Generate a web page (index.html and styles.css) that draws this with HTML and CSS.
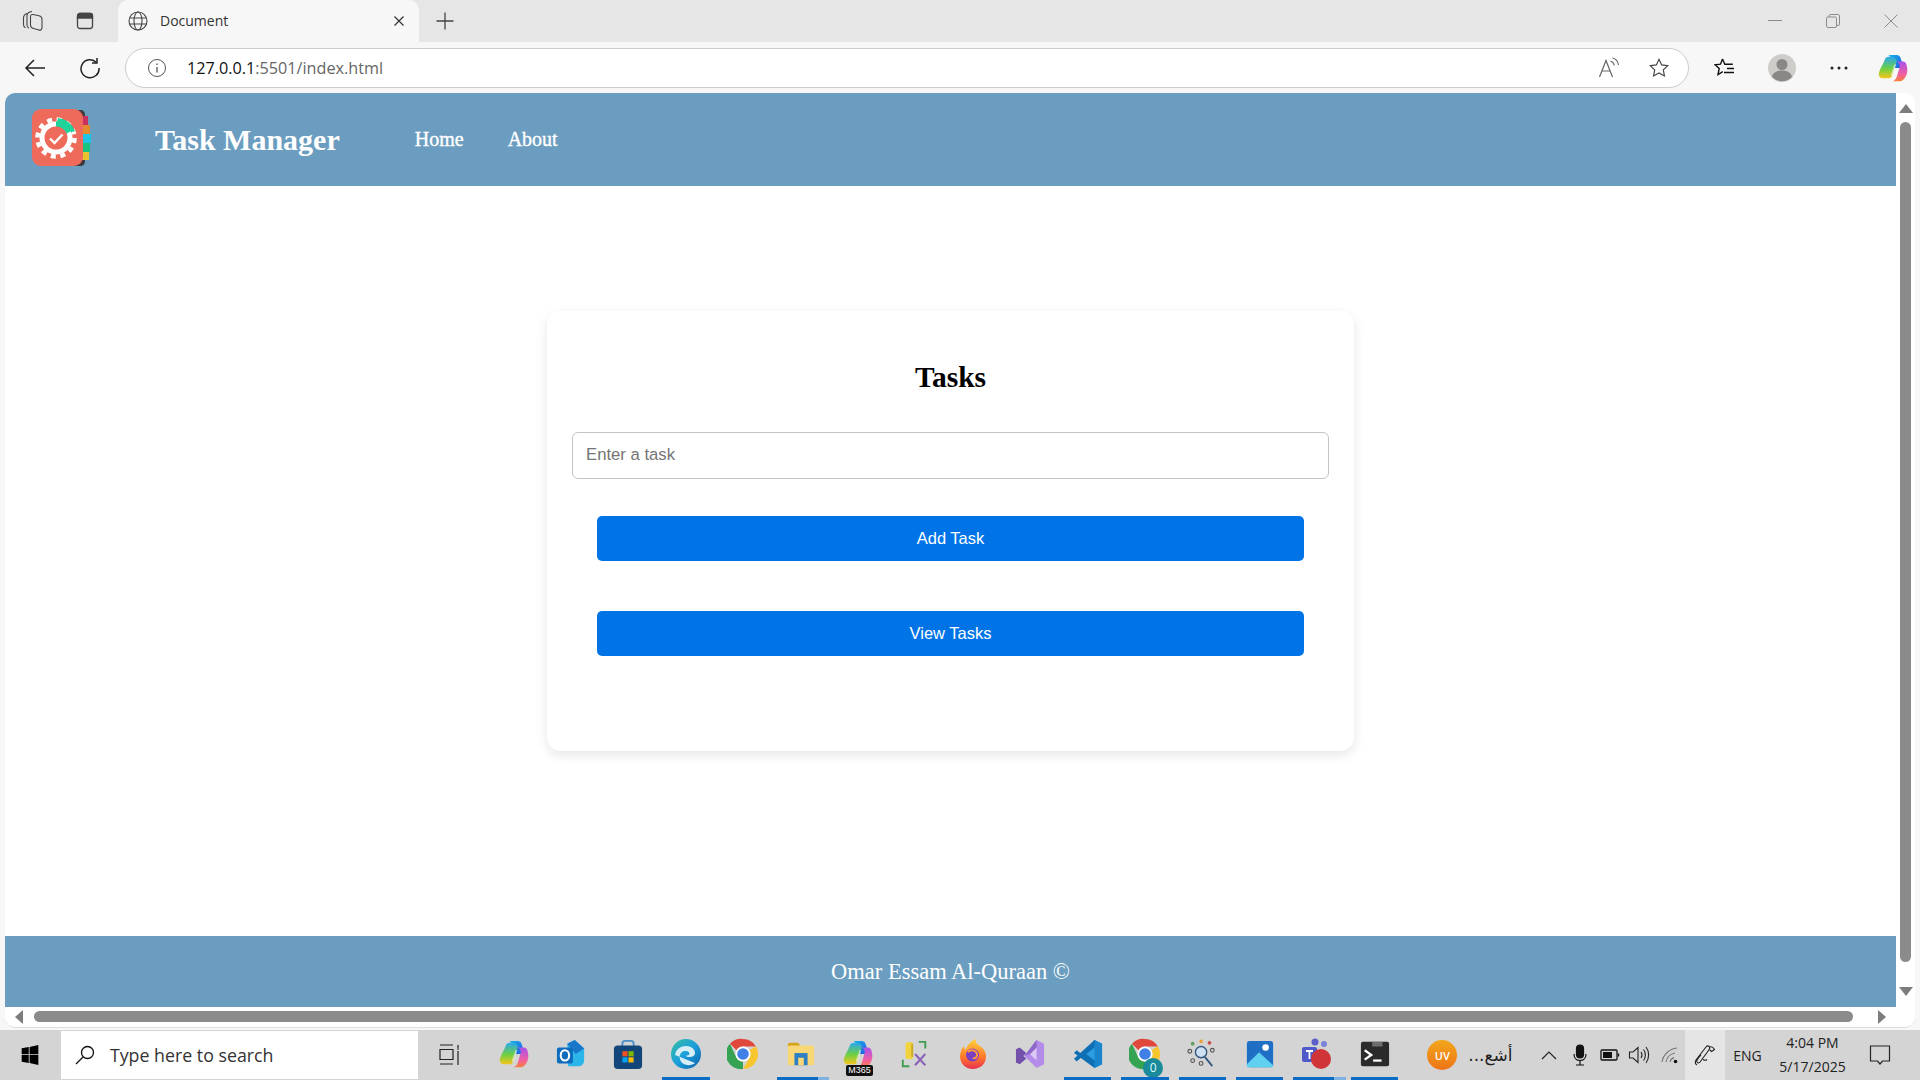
FILE: index.html
```html
<!DOCTYPE html>
<html lang="en">
<head>
    <meta charset="utf-8">
    <meta name="viewport" content="width=device-width,initial-scale=1.0">
    <title>Document</title>
    <link rel="stylesheet" href="styles.css">
</head>
<body>
    <svg class="defs" aria-hidden="true">
        <defs>
            <linearGradient id="cp-a" x1="0" y1="0" x2="1" y2="1"><stop offset="0" stop-color="#16b4ea"/><stop offset="1" stop-color="#2456e0"/></linearGradient>
            <linearGradient id="cp-b" x1="0" y1="0" x2="0" y2="1"><stop offset="0" stop-color="#2aa8f0"/><stop offset=".55" stop-color="#6fd042"/><stop offset="1" stop-color="#f7c51e"/></linearGradient>
            <linearGradient id="cp-c" x1="0" y1="0" x2="0" y2="1"><stop offset="0" stop-color="#a752ec"/><stop offset=".65" stop-color="#f25f9f"/><stop offset="1" stop-color="#f77f3a"/></linearGradient>
            <linearGradient id="edge-a" x1="0" y1="0" x2="1" y2="1"><stop offset="0" stop-color="#35c1a0"/><stop offset=".5" stop-color="#1c9fdc"/><stop offset="1" stop-color="#0b5fa8"/></linearGradient>
            <linearGradient id="fx-a" x1="0" y1="0" x2="0" y2="1"><stop offset="0" stop-color="#ffd23a"/><stop offset=".6" stop-color="#ff7a2b"/><stop offset="1" stop-color="#e8304f"/></linearGradient>
            <linearGradient id="uv-a" x1="0" y1="0" x2="0" y2="1"><stop offset="0" stop-color="#f2a71c"/><stop offset="1" stop-color="#ee7416"/></linearGradient>
            <symbol id="copilot" viewBox="0 0 32 32">
                <path d="M11 2h9c2 0 3.300 1 4 3l3.600 11h-9.600L13.500 5c-.5-1.700-1.300-2.600-2.500-3z" fill="url(#cp-a)"/>
                <path d="M11.500 4C9.500 4 8 5 7.300 7C5 13 2 17 1 21c-.8 3 1 6 4 6h6c2.200 0 3.500-1 4.200-3L20 8.500C19 6 17 4 15 4z" fill="url(#cp-b)"/>
                <path d="M20 9h6.500c2 0 3 1 3.500 2.500 1.500 4 1.800 8 .5 11.500-1 2.700-3.500 7-7 7h-8.500c2 0 4-1.700 5-4.500l3-10c.7-2.500 0-5-3-6.500z" fill="url(#cp-c)"/>
                <path d="M18.500 12l-4 12" stroke="#fff" stroke-opacity=".55" stroke-width="2"/>
            </symbol>
            <symbol id="chrome" viewBox="0 0 32 32">
                <path d="M16 1a15 15 0 0 1 13 7.500H16a7.500 7.500 0 0 0-6.500 3.750L3 5.800A15 15 0 0 1 16 1z" fill="#e0483c"/>
                <path d="M29 8.500A15 15 0 0 1 16 31l6.500-11.250A7.500 7.500 0 0 0 22.500 12z" fill="#f7c62f"/>
                <path d="M3 5.800 9.500 19.750A7.500 7.500 0 0 0 16 23.500L16 31A15 15 0 0 1 3 5.800z" fill="#35a351"/>
                <circle cx="16" cy="16" r="7.500" fill="#fff"/>
                <circle cx="16" cy="16" r="5.800" fill="#3f7fe6"/>
            </symbol>
            <symbol id="tray-star" viewBox="0 0 24 24">
                <path d="M12 2.500l2.900 6.100 6.600.9-4.800 4.600 1.200 6.600-5.900-3.200-5.900 3.200 1.200-6.600L2.500 9.500l6.600-.9z"/>
            </symbol>
        </defs>
    </svg>

    <div class="browser">
        <div class="tab-strip">
            <div class="strip-btn">
                <svg class="ico-22" viewBox="0 0 22 22" fill="none" stroke="#444" stroke-width="1.100"><path d="M5 3.500C3 4.200 1.500 5.500 1.500 8v6.500c0 1.500.7 2.700 2 3.200"/><path d="M10 1.500C7.500 1.800 5 3 5 6v9c0 1.500.7 2.700 2 3.200"/><path d="M11 4.500l6 1.300c1.600.4 3 1.700 3 3.500v8.500c0 1.700-1.500 2.700-3 2.200l-5.500-1.500c-1.500-.4-3-1.700-3-3.500V6.500c0-1.500 1-2.300 2.500-2z"/></svg>
            </div>
            <div class="strip-btn">
                <svg class="ico-20" viewBox="0 0 20 20" fill="none" stroke="#444" stroke-width="1.300"><rect x="2.500" y="2.500" width="15" height="15" rx="2.500"/><path d="M2.500 5a2.500 2.500 0 0 1 2.500-2.500h10A2.500 2.500 0 0 1 17.500 5v2h-15z" fill="#444"/></svg>
            </div>
            <div class="tab">
                <svg class="ico-20" viewBox="0 0 20 20" fill="none" stroke="#444" stroke-width="1.100"><circle cx="10" cy="10" r="9"/><ellipse cx="10" cy="10" rx="4" ry="9"/><path d="M1.500 7h17M1.500 13h17"/></svg>
                <span class="tab-title">Document</span>
                <svg class="tab-close" viewBox="0 0 12 12" stroke="#333" stroke-width="1.200"><path d="M1.500 1.500l9 9M10.500 1.500l-9 9"/></svg>
            </div>
            <div class="strip-btn">
                <svg class="ico-20" viewBox="0 0 20 20" stroke="#444" stroke-width="1.300"><path d="M10 1.500v17M1.500 10h17"/></svg>
            </div>
            <div class="win-controls">
                <div class="win-btn"><svg class="ico-14" viewBox="0 0 14 14" stroke="#8c8c8c" stroke-width="1"><path d="M0 6.500h14"/></svg></div>
                <div class="win-btn"><svg class="ico-14" viewBox="0 0 14 14" fill="none" stroke="#8c8c8c" stroke-width="1"><rect x=".5" y="3" width="10" height="10.500" rx="1.500"/><path d="M3 3V2a1.500 1.500 0 0 1 1.500-1.500h8A1.500 1.500 0 0 1 13.500 2v8a1.500 1.500 0 0 1-1.500 1.500h-1"/></svg></div>
                <div class="win-btn"><svg class="ico-14" viewBox="0 0 14 14" stroke="#8c8c8c" stroke-width="1"><path d="M.5.5l13 13M13.500.5l-13 13"/></svg></div>
            </div>
        </div>

        <div class="toolbar">
            <div class="tool-btn">
                <svg class="ico-22" viewBox="0 0 22 22" fill="none" stroke="#222" stroke-width="1.500"><path d="M21 11H2M10 3l-8 8 8 8"/></svg>
            </div>
            <div class="tool-btn">
                <svg class="ico-22" viewBox="0 0 22 22" fill="none" stroke="#222" stroke-width="1.500"><path d="M17.500 5.500A9 9 0 1 0 20 11"/><path d="M18 1v5h-5"/></svg>
            </div>
            <div class="address">
                <svg class="ico-20" viewBox="0 0 20 20" fill="none" stroke="#555" stroke-width="1"><circle cx="10" cy="10" r="8.500"/><path d="M10 9v5.500M10 5.500v1.500" stroke-width="1.300"/></svg>
                <span class="url"><span class="url-host">127.0.0.1</span>:5501/index.html</span>
                <div class="address-end">
                    <svg class="ico-22" viewBox="0 0 22 22" fill="none" stroke="#666" stroke-width="1.200"><path d="M1.500 20 8 3.500 14.500 20M4 14h8"/><path d="M12.500 4c2 .6 3.300 2 3.800 4.500M14.500 1c3.300.8 5.500 3.500 6 7" stroke-width="1.100"/></svg>
                    <svg class="ico-22" viewBox="0 0 24 24" fill="none" stroke="#444" stroke-width="1.300"><use href="#tray-star"/></svg>
                </div>
            </div>
            <div class="tool-btn tool-btn-wide">
                <svg class="ico-22" viewBox="0 0 22 22" fill="none" stroke="#111" stroke-width="1.400"><path d="M8.500 2l2.300 5.200h8M8.500 2 6.500 7.200 1 7.800l4.200 3.700L4 17.500l4.800-2.800M13 11.500h7M10 15.500h10"/></svg>
            </div>
            <div class="tool-btn tool-btn-wide">
                <svg class="ico-28" viewBox="0 0 28 28"><circle cx="14" cy="14" r="14" fill="#cfcdca"/><circle cx="14" cy="10.500" r="5.500" fill="#8a8886"/><path d="M4 23c1-4.500 5-6.500 10-6.500s9 2 10 6.500a14 14 0 0 1-20 0z" fill="#8a8886"/></svg>
            </div>
            <div class="tool-btn tool-btn-wide">
                <svg class="ico-22" viewBox="0 0 22 22" fill="#222"><circle cx="4" cy="11" r="1.500"/><circle cx="11" cy="11" r="1.500"/><circle cx="18" cy="11" r="1.500"/></svg>
            </div>
            <div class="tool-btn tool-btn-last">
                <svg class="ico-30"><use href="#copilot"/></svg>
            </div>
        </div>

        <div class="viewport">
            <div class="page">
                <header class="navbar">
                    <svg class="logo" viewBox="0 0 60 58">
                        <path d="M38 1h10c3.500 0 5 2 5 5v46c0 3-1.500 5-5 5H38z" fill="#3f3a3c"/>
                        <rect x="50" y="7" width="6" height="9" fill="#c8305f"/>
                        <rect x="50" y="16" width="8" height="9" fill="#e58a2e"/>
                        <rect x="50" y="25" width="9" height="9" fill="#1fc4e2"/>
                        <rect x="50" y="34" width="8" height="9" fill="#16c47f"/>
                        <rect x="50" y="43" width="7" height="8" fill="#e8c42f"/>
                        <rect x="0" y="0" width="51" height="57" rx="9" fill="#ee6b5b"/>
                        <circle cx="24" cy="29" r="18.500" fill="none" stroke="#fff" stroke-width="4.500" stroke-dasharray="5 4.700"/>
                        <circle cx="24" cy="29" r="16.500" fill="#fff"/>
                        <path d="M24 12.500a16.500 16.500 0 0 1 15 9.500l-5 3a12 12 0 0 0-10-6z" fill="#1fd49a"/>
                        <path d="M26 9a20 20 0 0 1 17 13l-4 1.500A16 16 0 0 0 25 13z" fill="#1fd49a"/>
                        <circle cx="24" cy="29" r="11.500" fill="#ee6b5b"/>
                        <path d="M18 29.500l4.500 4.500 8-8.500" fill="none" stroke="#fff" stroke-width="2.400"/>
                    </svg>
                    <span class="brand">Task Manager</span>
                    <nav class="nav-links">
                        <a href="#">Home</a>
                        <a href="#">About</a>
                    </nav>
                </header>

                <main class="content">
                    <section class="card">
                        <h2>Tasks</h2>
                        <input type="text" class="task-input" placeholder="Enter a task">
                        <button class="btn btn-add">Add Task</button>
                        <button class="btn">View Tasks</button>
                    </section>
                </main>

                <footer class="footer">Omar Essam Al-Quraan ©</footer>
            </div>

            <div class="vscroll">
                <span class="arrow arrow-up"></span>
                <span class="vthumb"></span>
                <span class="arrow arrow-down"></span>
            </div>
            <div class="hscroll">
                <span class="arrow arrow-left"></span>
                <span class="hthumb"></span>
                <span class="arrow arrow-right"></span>
            </div>
        </div>
    </div>

    <div class="taskbar">
        <div class="start">
            <svg class="ico-20" viewBox="0 0 20 24" fill="#000"><path d="M0 4l8.500-1.500V11H0zM9.500 2.300 20 0v11H9.500zM0 12h8.500v9.500L0 20zM9.500 12H20v12L9.500 21.700z"/></svg>
        </div>
        <div class="search">
            <svg class="ico-20" viewBox="0 0 20 20" fill="none" stroke="#111" stroke-width="1.300"><circle cx="12.500" cy="7.500" r="6"/><path d="M8 12 1 19"/></svg>
            <span>Type here to search</span>
        </div>
        <div class="taskview">
            <svg class="ico-22" viewBox="0 0 22 22" fill="none" stroke="#222" stroke-width="1.200"><path d="M1 1h13M1 5.500h13v10H1zM1 20h13M19 1v3M19 7v14" /><path d="M19 4.500v1" stroke-width="2"/></svg>
        </div>

        <div class="task-icons">
            <div class="task-item"><svg class="ico-30"><use href="#copilot"/></svg></div>
            <div class="task-item">
                <svg class="ico-30" viewBox="0 0 32 32"><path d="M12 5 20 1l10 9v13c0 3-2 6-6 6H13z" fill="#2cb5e8"/><path d="M12 5 20 1l10 9-9 6z" fill="#1877c9"/><rect x="1" y="9" width="17" height="17" rx="2" fill="#0f6cbd"/><ellipse cx="9.500" cy="17.500" rx="4.500" ry="5.500" fill="none" stroke="#fff" stroke-width="2.200"/></svg>
            </div>
            <div class="task-item">
                <svg class="ico-30" viewBox="0 0 32 32"><path d="M10 8V5a3 3 0 0 1 3-3h6a3 3 0 0 1 3 3v3" fill="none" stroke="#4a90c8" stroke-width="2"/><rect x="1" y="7" width="30" height="25" rx="4" fill="#12457a"/><rect x="10" y="13" width="5.500" height="5.500" fill="#f25022"/><rect x="16.500" y="13" width="5.500" height="5.500" fill="#7fba00"/><rect x="10" y="19.500" width="5.500" height="5.500" fill="#00a4ef"/><rect x="16.500" y="19.500" width="5.500" height="5.500" fill="#ffb900"/></svg>
            </div>
            <div class="task-item task-item-open">
                <svg class="ico-32" viewBox="0 0 32 32"><circle cx="16" cy="16" r="15" fill="url(#edge-a)"/><path d="M5 17c1-6 6-9 11-9 5 0 9 3 9 7 0 3-3 4-6 4-2 0-3-.6-3-1.500 3 .5 4-1.500 3-3-1.500-2-6-2-8 .5-2.500 3-1.500 8 2 10.500 4 2.500 9 2 12-.5" fill="#d7eef7"/></svg>
            </div>
            <div class="task-item"><svg class="ico-32"><use href="#chrome"/></svg></div>
            <div class="task-item task-item-open task-item-multi">
                <svg class="ico-30" viewBox="0 0 32 32"><path d="M2 6a2 2 0 0 1 2-2h9l3 4h-14z" fill="#d6a21c"/><rect x="2" y="7" width="28" height="21" rx="2" fill="#f8d776"/><rect x="9" y="15" width="14" height="13" fill="#2d7fc4"/><rect x="13" y="20" width="6" height="8" fill="#f8d776"/></svg>
            </div>
            <div class="task-item m365">
                <svg class="ico-30"><use href="#copilot"/></svg>
                <span class="m365-tag">M365</span>
            </div>
            <div class="task-item">
                <svg class="ico-30" viewBox="0 0 32 32"><path d="M6 5c0-2 8-2 8 0v15c0 2-8 2-8 0z" fill="#f2d33c"/><path d="M14 5h-2v14h2z" fill="#c9a92a"/><path d="M20 3h7v7M3 22v7h7" fill="none" stroke="#3f9e4d" stroke-width="2"/><path d="M16 28l11-12M27 28 16 16" stroke="#8a63b8" stroke-width="2.200"/></svg>
            </div>
            <div class="task-item">
                <svg class="ico-32" viewBox="0 0 32 32"><path d="M16 31C8 31 3 25 3 18c0-4 2-8 4-10 0 2 1 3 2 4 1-5 5-9 10-11-1 3 1 5 4 7 4 3 6 6 6 11 0 7-6 12-13 12z" fill="url(#fx-a)"/><circle cx="15.500" cy="17" r="6.500" fill="#7b3fc4"/><path d="M11 14c3-3 8-2 9 2 .6 3-2 5-4 4" fill="none" stroke="#ff9a3c" stroke-width="2"/></svg>
            </div>
            <div class="task-item">
                <svg class="ico-30" viewBox="0 0 32 32"><path d="M23 1l8 4v22l-8 4-13-13z" fill="#b38be8"/><path d="M23 9v14l-7-7z" fill="#dcc9f5"/><path d="M1 11l4-2 7 6-3 3 3 3-7 6-4-2z" fill="#7450ad"/><path d="M10 18l13-17v8l-7 7z" fill="#8c66c9"/></svg>
            </div>
            <div class="task-item task-item-open">
                <svg class="ico-30" viewBox="0 0 32 32"><path d="M23 1l8 4v22l-8 4-13-12z" fill="#2a9ee0"/><path d="M23 1v30l8-4V5z" fill="#1a84cc"/><path d="M23 9l-9 7 9 7v8L4 17l-3-2 3-3 5 4 14-15z" fill="#0e6fb5"/><path d="M1 21l3 3 19-17V1z" fill="#0e6fb5"/></svg>
            </div>
            <div class="task-item task-item-open chrome-badge">
                <svg class="ico-32"><use href="#chrome"/></svg>
                <span class="badge-0">0</span>
            </div>
            <div class="task-item task-item-open">
                <svg class="ico-30" viewBox="0 0 32 32"><circle cx="15" cy="14" r="6" fill="#cfe0f2" stroke="#34577f" stroke-width="1.500"/><path d="M19 19l8 10" stroke="#34577f" stroke-width="2"/><g fill="none" stroke="#555" stroke-width="1.200"><circle cx="3" cy="13" r="2"/><circle cx="27" cy="12" r="2"/><circle cx="6" cy="23" r="2"/><circle cx="15" cy="26" r="2"/></g><circle cx="15" cy="2.500" r="2" fill="#e8a33c"/><circle cx="24" cy="4" r="2" fill="#c8504c"/><circle cx="6" cy="5" r="2" fill="#5aa05a"/></svg>
            </div>
            <div class="task-item task-item-open">
                <svg class="ico-30" viewBox="0 0 32 32"><rect x="2" y="2" width="28" height="28" rx="3" fill="#1f6fc4"/><path d="M2 27 15 14l15 14v2H2z" fill="#5fd0f0"/><circle cx="22" cy="9" r="3.500" fill="#fff"/></svg>
            </div>
            <div class="task-item task-item-open task-item-multi">
                <svg class="ico-32" viewBox="0 0 32 32"><circle cx="23" cy="6" r="3" fill="#7b83d6"/><circle cx="14" cy="4" r="3.500" fill="#5b5fc7"/><rect x="1" y="9" width="15" height="15" rx="2" fill="#5059c9"/><path d="M5 13h7M8.500 13v8" stroke="#fff" stroke-width="1.800"/><circle cx="20" cy="21" r="10" fill="#d13438"/></svg>
            </div>
            <div class="task-item task-item-open">
                <svg class="ico-30" viewBox="0 0 32 32"><rect x="1" y="3" width="30" height="26" rx="2" fill="#2b2b2b"/><rect x="13" y="3" width="11" height="5" fill="#6d6d6d"/><path d="M5 12l7 5-7 5" fill="none" stroke="#fff" stroke-width="2.400"/><path d="M14 23h9" stroke="#fff" stroke-width="2.400"/></svg>
            </div>
        </div>

        <div class="news">
            <svg class="ico-30" viewBox="0 0 30 30"><circle cx="15" cy="15" r="15" fill="url(#uv-a)"/></svg>
            <span class="uv">UV</span>
            <span class="news-text" dir="rtl" lang="ar">أشع...</span>
        </div>

        <div class="tray">
            <div class="tray-cell"><svg class="ico-16" viewBox="0 0 16 16" fill="none" stroke="#222" stroke-width="1.200"><path d="M1 12l7-7 7 7"/></svg></div>
            <div class="tray-cell"><svg class="ico-22" viewBox="0 0 22 22" fill="none" stroke="#111" stroke-width="1.200"><rect x="7.500" y="1" width="7" height="13" rx="3.500" fill="#111"/><path d="M5 10c0 4 2.500 6.500 6 6.500s6-2.500 6-6.500M11 16.500V21M7 21h8"/></svg></div>
            <div class="tray-cell"><svg class="ico-20" viewBox="0 0 20 20" fill="none" stroke="#111" stroke-width="1.300"><rect x="1" y="5" width="16" height="10" rx="1"/><rect x="3" y="7" width="9" height="6" fill="#111" stroke="none"/><path d="M18.500 8.500v3"/></svg></div>
            <div class="tray-cell"><svg class="ico-22" viewBox="0 0 22 22" fill="none" stroke="#222" stroke-width="1.100"><path d="M1.500 8v6h3.500L10 18.500v-15L5 8z"/><path d="M13 8c1.200 1.800 1.200 4.200 0 6M15.500 5.500c2.500 3 2.500 8 0 11M18 3c3.500 4.500 3.500 11.500 0 16"/></svg></div>
            <div class="tray-cell"><svg class="ico-18" viewBox="0 0 18 18" fill="none" stroke="#777" stroke-width="1.100"><path d="M1 16C2 9 8 3 16 2M5 16c.8-4.500 4-8 9-9M9 16c.4-2 2-3.800 4-4.400"/><circle cx="14.500" cy="15.500" r="1.800" fill="#111" stroke="none"/></svg></div>
            <div class="tray-cell tray-pen"><svg class="ico-22" viewBox="0 0 22 22" fill="none" stroke="#222" stroke-width="1.100"><path d="M3 21c-2-1-2-3-1-5L12 3c1-1.500 3-1.500 3.500 0s0 2.500-1 3.500L6 18c-.8 1-2 1.500-3 0-1-2 2-5 4-7M15.500 3c1.500-.5 3.500 0 5 2.500l-3 2-1.500-1.500M9 15.500c1.500 1 3 1 4 0"/></svg></div>
            <div class="tray-cell tray-text">ENG</div>
            <div class="tray-cell clock"><span>4:04 PM</span><span>5/17/2025</span></div>
            <div class="tray-cell"><svg class="ico-22" viewBox="0 0 22 22" fill="none" stroke="#222" stroke-width="1.200"><path d="M1.500 2h19v15h-7L11 20l-2.500-3h-7z"/></svg></div>
            <div class="tray-cell"></div>
        </div>
    </div>
</body>
</html>
```

FILE: styles.css
```css
* {box-sizing: border-box;}
html, body {margin: 0; height: 100%; overflow: hidden;}
body {width: 1920px; height: 1080px; display: flex; flex-direction: column; background: #d4d4d4; font-family: "Open Sans", "Noto Sans", sans-serif; color: #222;}
svg {display: block; flex: none;}
.defs {position: absolute; width: 0; height: 0;}

.ico-14 {width: 14px; height: 14px;}
.ico-16 {width: 16px; height: 16px;}
.ico-18 {width: 18px; height: 18px;}
.ico-20 {width: 20px; height: 20px;}
.ico-22 {width: 22px; height: 22px;}
.ico-28 {width: 28px; height: 28px;}
.ico-30 {width: 30px; height: 30px;}
.ico-32 {width: 32px; height: 32px;}

/* browser chrome */
.browser {height: 1030px; background: #f7f7f7; display: flex; flex-direction: column;}
.tab-strip {height: 42px; background: #e6e6e6; display: flex; padding-left: 7px;}
.strip-btn {width: 52px; display: flex; align-items: center; justify-content: center;}
.tab {width: 301px; margin-left: 7px; background: #f7f7f7; border-radius: 10px 10px 0 0; display: flex; align-items: center; padding-left: 10px;}
.tab-title {margin: 0 0 2px 12px; font-size: 14px; color: #333;}
.tab-close {width: 12px; height: 12px; margin-left: auto; margin-right: 14px;}
.win-controls {margin-left: auto; display: flex;}
.win-btn {width: 58px; display: flex; align-items: center; justify-content: center;}

.toolbar {height: 51px; display: flex; align-items: center; padding-left: 7px;}
.tool-btn {width: 55px; display: flex; justify-content: center; align-items: center;}
.tool-btn-wide {width: 57px;}
.tool-btn-last {width: 52px;}
.address {width: 1564px; height: 40px; margin: 0 7px 0 8px; background: #fff; border: 1px solid #ccc; border-radius: 20px; display: flex; align-items: center; padding-left: 21px;}
.url {margin-left: 20px; font-size: 16.200px; color: #666;}
.url-host {color: #111;}
.address-end {margin-left: auto; display: flex; gap: 28px; padding-right: 18px;}

.viewport {height: 935px; margin: 0 5px; display: grid; grid-template-columns: 1891px 19px; grid-template-rows: 914px 19px; background: #fff; border-bottom: 1px solid #ddd; border-radius: 10px; overflow: hidden;}

/* scrollbars */
.vscroll {display: flex; flex-direction: column; align-items: center; padding: 11px 0 11px;}
.vthumb {flex: 1; width: 11px; margin: 9px 0 25px; background: #8b8b8b; border-radius: 6px;}
.hscroll {display: flex; align-items: center; padding: 0 10px;}
.hthumb {flex: 1; height: 11px; margin: 0 25px 0 11px; background: #8b8b8b; border-radius: 6px;}
.arrow {width: 0; height: 0; border-style: solid; border-color: transparent;}
.arrow-up {border-width: 0 7px 9px; border-bottom-color: #7d7d7d;}
.arrow-down {border-width: 9px 7px 0; border-top-color: #7d7d7d;}
.arrow-left {border-width: 7px 8px 7px 0; border-right-color: #7d7d7d;}
.arrow-right {border-width: 7px 0 7px 8px; border-left-color: #7d7d7d;}

/* the page itself */
.page {display: flex; flex-direction: column; font-family: "Liberation Serif", serif; background: #fff;}
.navbar {height: 93px; background: #6b9dc0; display: flex; align-items: center; padding-left: 27px; color: #fff;}
.logo {width: 60px; height: 58px; margin-right: 63px; margin-top: -3px;}
.brand {font-size: 30px; font-weight: bold;}
.nav-links {display: flex; gap: 44px; margin-left: 75px;}
.nav-links a {color: #fff; text-decoration: none; font-size: 20px; -webkit-text-stroke: .35px #fff;}

.content {flex: 1; display: flex; justify-content: center; padding-top: 125px;}
.card {width: 807px; height: 440px; padding: 24px 25px 0; background: #fff; border-radius: 14px; box-shadow: 0 4px 12px rgba(0,0,0,.1); display: flex; flex-direction: column; align-items: center;}
.card h2 {margin: 26px 0 0; font-size: 29.500px; line-height: 33px; color: #000;}
.task-input {width: 757px; height: 47px; margin-top: 38px; padding: 0 13px 2px; border: 1px solid #c4c4c4; border-radius: 6px; font-family: "Liberation Sans", sans-serif; font-size: 16.700px; background: #fff; color: #222;}
.task-input::placeholder {color: #757575;}
.btn {width: 707px; height: 45px; margin-top: 50px; border: none; border-radius: 5px; background: #0073e6; color: #fff; font-family: "Liberation Sans", sans-serif; font-size: 16.500px;}
.btn-add {margin-top: 37px;}

.footer {height: 71px; background: #6b9dc0; color: #fff; font-size: 22.500px; display: flex; align-items: center; justify-content: center;}

/* windows taskbar */
.taskbar {height: 50px; display: flex; align-items: stretch; background: #d4d4d4;}
.start {width: 61px; display: flex; align-items: center; justify-content: center;}
.search {width: 358px; margin-top: 1px; margin-bottom: 1px; background: #fff; display: flex; align-items: center; padding-left: 14px; gap: 15px; font-size: 17.800px; color: #333;}
.taskview {width: 67px; display: flex; align-items: center; justify-content: center; padding-right: 3px;}
.task-icons {display: flex;}
.task-item {width: 57.400px; position: relative; display: flex; align-items: center; justify-content: center; padding-bottom: 2px;}
.task-item-open::after {content: ""; position: absolute; left: 5px; right: 5px; bottom: 0; height: 3px; background: #0a6cc4;}
.task-item-multi::after {right: 0; background: linear-gradient(to right, #0a6cc4 78%, #7fb2e0 78%);}
.m365-tag {position: absolute; left: 17px; bottom: 4px; padding: 0 2px; background: #111; color: #fff; font-size: 9px; line-height: 11px; border-radius: 2px; font-family: "Liberation Sans", sans-serif;}
.badge-0 {position: absolute; left: 27px; bottom: 2px; width: 20px; height: 20px; border-radius: 50%; background: #1b8a9a; color: #dff; font-size: 12px; line-height: 20px; text-align: center;}

.news {width: 131px; position: relative; display: flex; align-items: center; padding-left: 24px; gap: 11px;}
.uv {position: absolute; left: 24px; width: 30px; text-align: center; color: #fff; font-size: 11px; font-weight: 600;}
.news-text {font-family: "DejaVu Sans", sans-serif; font-size: 17px; color: #222;}

.tray {display: grid; grid-template-columns: 30px 32px 28px 30px 31px 40px 45px 85px 50px 15px;}
.tray-cell {display: flex; align-items: center; justify-content: center;}
.tray-pen {background: #e5e5e5;}
.tray-text {font-size: 14px;}
.clock {flex-direction: column; font-size: 14px; line-height: 24px;}
```
